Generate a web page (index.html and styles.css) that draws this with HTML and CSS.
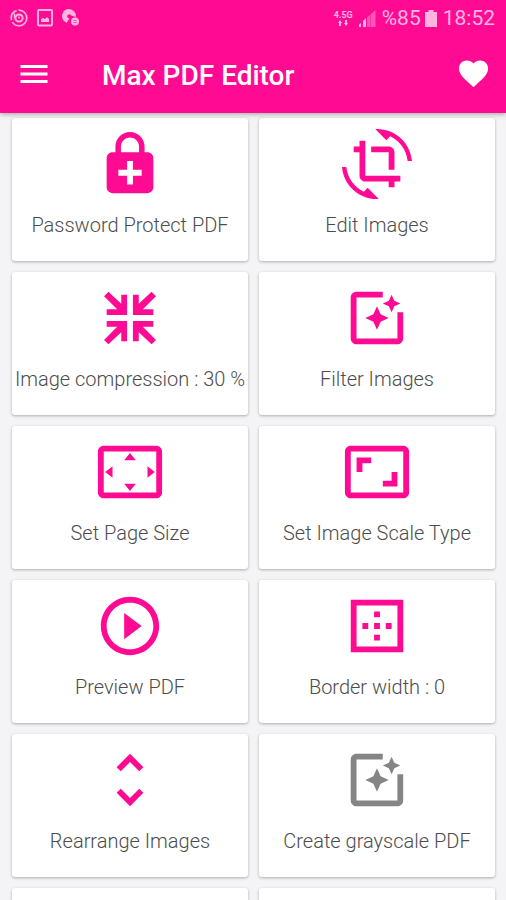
FILE: index.html
```html
<!DOCTYPE html>
<html lang="en">
<head>
<meta charset="utf-8">
<meta name="viewport" content="width=device-width, initial-scale=1">
<title>Max PDF Editor</title>
<link rel="stylesheet" href="styles.css">
</head>
<body>
<header class="top">
  <div class="status">
    <div class="status-group notices">
      <svg width="18" height="18" viewBox="0 0 18 18" fill="none" stroke="currentColor"><circle cx="9" cy="9" r="7.800" stroke-width="1.700" stroke-dasharray="20 2 12 2"/><circle cx="9" cy="9" r="3.600" stroke-width="2"/><path d="M4.500 4.500v5M9 7.500v2" stroke-width="1.400"/></svg>
      <svg width="16" height="18" viewBox="0 0 16 18"><rect x="1" y="1" width="14" height="15.500" rx="1" fill="none" stroke="currentColor" stroke-width="1.900"/><path d="M4 13V10l2-1 2 1 2-2 2 2v3z" fill="currentColor"/></svg>
      <svg width="18" height="18" viewBox="0 0 18 18"><path fill="currentColor" fill-rule="evenodd" d="M7 0a7 7 0 0 0-4 12.700L4.500 14l3-4.700A2 2 0 1 1 9 6.500L13.800 8A7 7 0 0 0 7 0z"/><circle cx="13" cy="12.500" r="4" fill="currentColor"/><path d="M11.500 11.500h3M11.500 13.500h3" stroke="#ff0a92" stroke-width=".6"/></svg>
    </div>
    <div class="status-group">
      <div class="network"><span>4.5G</span>
        <svg width="12" height="6" viewBox="0 0 12 6" fill="currentColor"><path d="M1 3l2-3 2 3H4v3H2V3zM7 3h1V0h2v3h1L9 6z"/></svg>
      </div>
      <svg width="17" height="17" viewBox="0 0 17 17" fill="currentColor"><path d="M0 14.500l2-1.500v4H0zM4 11l3-3v9H4z"/><path opacity=".45" d="M8 7.500L11 5v12H8zM11.500 4.500L16.500 0v17h-5z"/></svg>
      <span class="charge">%85
        <svg width="12" height="17" viewBox="0 0 12 17" fill="currentColor"><path d="M3.500 0h5v2H12v15H0V2h3.500z"/></svg>
      </span>
      <span>18:52</span>
    </div>
  </div>
  <div class="appbar">
    <button class="bar-button" aria-label="Menu"><svg width="36" height="36" viewBox="0 0 24 24" fill="currentColor"><path d="M3 18h18v-2H3v2zm0-5h18v-2H3v2zm0-7v2h18V6H3z"/></svg></button>
    <h1>Max PDF Editor</h1>
    <button class="bar-button" aria-label="Favorite"><svg width="35" height="35" viewBox="0 0 24 24" fill="currentColor"><path d="M12 21.350l-1.450-1.320C5.400 15.360 2 12.280 2 8.500 2 5.420 4.420 3 7.500 3c1.740 0 3.410.81 4.500 2.090C13.090 3.810 14.760 3 16.500 3 19.580 3 22 5.420 22 8.500c0 3.780-3.400 6.860-8.550 11.540L12 21.350z"/></svg></button>
  </div>
</header>
<main class="grid">
  <button class="card"><svg class="icon" viewBox="0 0 24 24"><path d="M18 8h-1V6c0-2.760-2.240-5-5-5S7 3.240 7 6v2H6c-1.100 0-2 .9-2 2v10c0 1.100.9 2 2 2h12c1.100 0 2-.9 2-2V10c0-1.100-.9-2-2-2zM8.900 6c0-1.710 1.390-3.100 3.100-3.100s3.100 1.390 3.100 3.100v2H8.900V6zM16 16h-3v3h-2v-3H8v-2h3v-3h2v3h3v2z"/></svg><span>Password Protect PDF</span></button>
  <button class="card"><svg class="icon" viewBox="0 0 24 24"><path d="M7.470 21.490C4.200 19.930 1.860 16.760 1.500 13H0c.51 6.160 5.660 11 11.950 11 .23 0 .44-.02.66-.03L8.800 20.150l-1.330 1.340zM12.050 0c-.23 0-.44.02-.66.04l3.810 3.810 1.330-1.330C19.800 4.070 22.140 7.240 22.500 11H24c-.51-6.160-5.660-11-11.950-11zM16 14h2V8c0-1.110-.9-2-2-2h-6v2h6v6zm-8 2V4H6v2H4v2h2v8c0 1.100.89 2 2 2h8v2h2v-2h2v-2H8z"/></svg><span>Edit Images</span></button>

  <button class="card"><svg class="icon" viewBox="0 0 24 24"><path d="M11 4H9v3.100L4.600 3 3.100 4.500 7.600 9H4v2h7zM13 4h2v3.100L19.400 3l1.500 1.500L16.400 9H20v2h-7zM11 20H9v-3.100L4.600 21l-1.500-1.500L7.600 15H4v-2h7zM13 20h2v-3.100l4.400 4.100 1.500-1.500-4.500-4.500H20v-2h-7z"/></svg><span>Image compression : 30 %</span></button>
  <button class="card"><svg class="icon" viewBox="0 0 24 24"><path d="M19 10v9H4.980V5h9V3H4.980c-1.100 0-2 .9-2 2v14c0 1.100.9 2 2 2h14c1.100 0 2-.9 2-2v-9H19zm-2.940-2.060L17 10l.94-2.060L20 7l-2.060-.94L17 4l-.94 2.060L14 7zM12 8l-1.250 2.750L8 12l2.750 1.250L12 16l1.250-2.750L16 12l-2.750-1.250z"/></svg><span>Filter Images</span></button>

  <button class="card"><svg class="icon" viewBox="0 0 24 24"><path d="M12 5.500L10 8h4l-2-2.500zM18 10v4l2.500-2L18 10zM6 10l-2.500 2L6 14v-4zm8 6h-4l2 2.500 2-2.500zm7-13H3c-1.100 0-2 .9-2 2v14c0 1.100.9 2 2 2h18c1.100 0 2-.9 2-2V5c0-1.100-.9-2-2-2zm0 16.010H3V4.990h18v14.020z"/></svg><span>Set Page Size</span></button>
  <button class="card"><svg class="icon" viewBox="0 0 24 24"><path d="M19 12h-2v3h-3v2h5v-5zM7 9h3V7H5v5h2V9zm14-6H3c-1.100 0-2 .9-2 2v14c0 1.100.9 2 2 2h18c1.100 0 2-.9 2-2V5c0-1.100-.9-2-2-2zm0 16.010H3V4.990h18v14.020z"/></svg><span>Set Image Scale Type</span></button>

  <button class="card"><svg class="icon" viewBox="0 0 24 24"><path d="M10 16.500l6-4.500-6-4.500v9zM12 2C6.480 2 2 6.480 2 12s4.480 10 10 10 10-4.480 10-10S17.520 2 12 2zm0 18c-4.410 0-8-3.590-8-8s3.590-8 8-8 8 3.590 8 8-3.590 8-8 8z"/></svg><span>Preview PDF</span></button>
  <button class="card"><svg class="icon" viewBox="0 0 24 24"><path d="M13 7h-2v2h2V7zm0 4h-2v2h2v-2zm4 0h-2v2h2v-2zM3 3v18h18V3H3zm16 16H5V5h14v14zm-6-4h-2v2h2v-2zm-4-4H7v2h2v-2z"/></svg><span>Border width : 0</span></button>

  <button class="card"><svg class="icon" viewBox="0 0 24 24"><path d="M12 5.830L15.170 9l1.410-1.410L12 3 7.410 7.590 8.830 9 12 5.830zm0 12.340L8.830 15l-1.410 1.410L12 21l4.590-4.590L15.170 15 12 18.170z"/></svg><span>Rearrange Images</span></button>
  <button class="card"><svg class="icon muted" viewBox="0 0 24 24"><path d="M19 10v9H4.980V5h9V3H4.980c-1.100 0-2 .9-2 2v14c0 1.100.9 2 2 2h14c1.100 0 2-.9 2-2v-9H19zm-2.940-2.060L17 10l.94-2.060L20 7l-2.060-.94L17 4l-.94 2.060L14 7zM12 8l-1.250 2.750L8 12l2.750 1.250L12 16l1.250-2.750L16 12l-2.750-1.250z"/></svg><span>Create grayscale PDF</span></button>

  <div class="card"></div>
  <div class="card"></div>
</main>
</body>
</html>
```
FILE: styles.css
```css
* {
  box-sizing: border-box;
}

body {
  margin: 0;
  height: 100vh;
  display: flex;
  flex-direction: column;
  overflow: hidden;
  background: #f4f4f6;
  font-family: Roboto, "Liberation Sans", sans-serif;
}

button {
  border: 0;
  padding: 0;
  font: inherit;
  cursor: pointer;
}

svg {
  display: block;
  flex: none;
}

.top {
  flex: none;
  position: relative;
  background: #ff0a92;
  color: #fff;
  box-shadow: 0 1px 5px rgba(0, 0, 0, 0.35);
}

.status {
  display: flex;
  justify-content: space-between;
  height: 36px;
  padding: 0 11px 0 10px;
  color: #ffb5e0;
  font-size: 21px;
}

.status-group {
  display: flex;
  align-items: center;
  gap: 6px;
}

.notices {
  gap: 9px;
}

.charge {
  display: flex;
  align-items: center;
  gap: 4px;
}

.network {
  display: flex;
  flex-direction: column;
  align-items: center;
  font-size: 9px;
  font-weight: 700;
  line-height: 10px;
}

.appbar {
  display: flex;
  align-items: center;
  height: 77px;
  padding: 0 15px 2px 16px;
}

.bar-button {
  background: none;
  color: #fff;
}

h1 {
  flex: 1;
  margin: 0;
  padding: 4px 0 0 50px;
  font-size: 28px;
  font-weight: 500;
  line-height: 32px;
}

.grid {
  flex: 1;
  min-height: 0;
  overflow: hidden;
  display: grid;
  grid-template-columns: 1fr 1fr;
  grid-auto-rows: 143px;
  gap: 11px;
  padding: 5px 11px 0 12px;
}

.card {
  display: flex;
  flex-direction: column;
  align-items: center;
  gap: 14px;
  min-width: 0;
  padding-top: 11px;
  border-radius: 3px;
  background: #fff;
  color: #4c4c4c;
  font-size: 20px;
  font-weight: 300;
  line-height: 24px;
  white-space: nowrap;
  box-shadow: 0 1px 3px rgba(0, 0, 0, 0.3);
}

.icon {
  width: 70px;
  height: 70px;
  fill: #ff0a92;
}

.muted {
  fill: #858585;
}
```
